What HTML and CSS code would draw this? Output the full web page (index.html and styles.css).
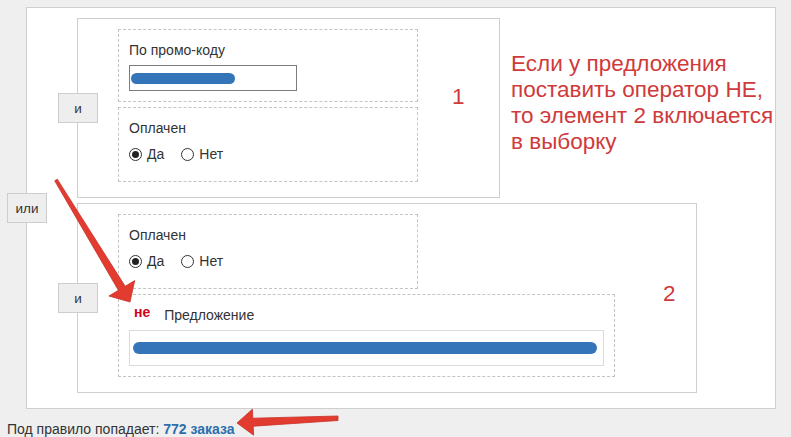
FILE: index.html
```html
<!DOCTYPE html>
<html lang="ru">
<head>
<meta charset="utf-8">
<title>Правило</title>
<link rel="stylesheet" href="styles.css">
</head>
<body>
<div class="page">
  <div class="rule">
    <span class="op op-or">или</span>
    <div class="group">
      <span class="op">и</span>
      <div class="cond">
        <div class="label">По промо-коду</div>
        <div class="input input-code"><span class="mask mask-short"></span></div>
      </div>
      <div class="cond">
        <div class="label">Оплачен</div>
        <div class="radios">
          <span class="radio"><span class="dot on"></span>Да</span>
          <span class="radio"><span class="dot"></span>Нет</span>
        </div>
      </div>
    </div>
    <div class="group">
      <span class="op">и</span>
      <div class="cond">
        <div class="label">Оплачен</div>
        <div class="radios">
          <span class="radio"><span class="dot on"></span>Да</span>
          <span class="radio"><span class="dot"></span>Нет</span>
        </div>
      </div>
      <div class="cond cond-wide">
        <div class="head"><span class="not">не</span><span class="label">Предложение</span></div>
        <div class="input input-offer"><span class="mask mask-long"></span></div>
      </div>
    </div>
  </div>
  <div class="summary">Под правило попадает: <a class="count" href="#">772 заказа</a></div>

  <div class="note note-1">1</div>
  <div class="note note-2">2</div>
  <div class="note note-text">Если у предложения<br>поставить оператор НЕ,<br>то элемент 2 включается<br>в выборку</div>

  <svg class="arrows" width="791" height="437" viewBox="0 0 791 437">
    <polygon class="arrow" points="57.3,179.2 125.2,286.3 134.7,280.6 130,302 108.9,296 118.4,290.3 54.7,180.8"/>
    <polygon class="arrow" points="338,416 252.8,418.2 252.4,409.2 237,423 253.6,435.2 253.2,426.2 338,420.5"/>
  </svg>
</div>
</body>
</html>
```

FILE: styles.css
```css
* { box-sizing: border-box; }
html, body { margin: 0; padding: 0; }
body {
  background: #efefef;
  font-family: "Liberation Sans", Arial, sans-serif;
  font-size: 14px;
  color: #333;
}
.page {
  position: relative;
  width: 791px;
  height: 437px;
  padding: 7px 0 0 7px;
  overflow: hidden;
}
.rule {
  position: relative;
  margin-left: 19px;
  width: 750px;
  background: #fff;
  border: 1px solid #cfcfcf;
  padding: 10px 0 15px 50px;
  display: flex;
  flex-direction: column;
  align-items: flex-start;
  gap: 5px;
}
.op {
  position: absolute;
  left: -20px;
  top: 50%;
  transform: translateY(-50%);
  width: 40px;
  height: 30px;
  background: #eee;
  border: 1px solid #cdcdcd;
  display: flex;
  align-items: center;
  justify-content: center;
  font-size: 13.5px;
  color: #333;
}
.group {
  position: relative;
  border: 1px solid #cfcfcf;
  background: #fff;
  padding: 10px 81px 15px 40px;
  display: flex;
  flex-direction: column;
  gap: 5px;
}
.cond {
  width: 300px;
  border: 1px dashed #c4c4c4;
  padding: 10px;
  display: flex;
  flex-direction: column;
  gap: 5px;
}
.cond-wide { width: 497px; }
.label { line-height: 20px; }
.input {
  background: #fff;
  display: flex;
  align-items: center;
}
.input-code {
  width: 168px;
  height: 26px;
  border: 1px solid #7c7c7c;
  padding-left: 1px;
}
.input-offer {
  height: 36px;
  border: 1px solid #dcdcdc;
  padding: 0 6px 0 3px;
}
.mask {
  display: block;
  background: #3474b8;
  border-radius: 6px;
}
.mask-short { width: 104px; height: 11px; }
.mask-long { width: 100%; height: 12px; }
.radios {
  display: flex;
  align-items: center;
  gap: 17px;
  height: 22px;
  margin-bottom: 6px;
}
.radio {
  display: flex;
  align-items: center;
  gap: 5px;
  line-height: 20px;
}
.dot {
  width: 13px;
  height: 13px;
  border: 1px solid #333;
  border-radius: 50%;
  display: flex;
  align-items: center;
  justify-content: center;
}
.dot.on::after {
  content: "";
  width: 7px;
  height: 7px;
  border-radius: 50%;
  background: #222;
}
.head {
  display: flex;
  align-items: flex-start;
  height: 20px;
}
.not {
  color: #d0021b;
  font-weight: bold;
  font-size: 14px;
  line-height: 14px;
  margin-left: 5px;
  margin-right: 14px;
}
.summary {
  margin-top: 11px;
  line-height: 18px;
  font-size: 14px;
  color: #333;
}
.count {
  color: #2c6ead;
  font-weight: bold;
  text-decoration: none;
}
.note {
  position: absolute;
  color: #cf3a3a;
  font-size: 22.5px;
  line-height: 26px;
  white-space: nowrap;
}
.note-1 { left: 452px; top: 84px; }
.note-2 { left: 663px; top: 281px; }
.note-text { left: 511px; top: 51px; }
.arrows {
  position: absolute;
  left: 0;
  top: 0;
  pointer-events: none;
}
.arrow {
  fill: #e23b30;
  stroke: #c9302a;
  stroke-width: 0.8;
  stroke-linejoin: round;
}
```
